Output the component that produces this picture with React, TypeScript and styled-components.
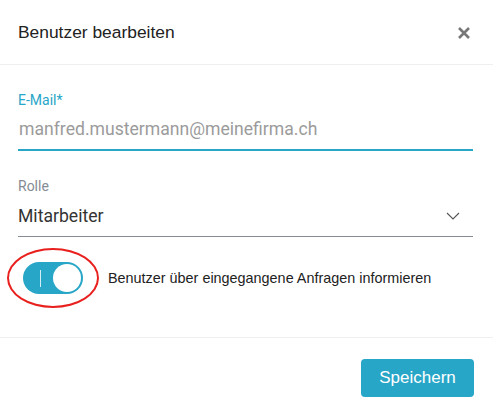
import React from 'react';
import styled, { createGlobalStyle } from 'styled-components';

const GlobalStyle = createGlobalStyle`
  html, body {
    margin: 0;
    padding: 0;
    background: #fff;
  }
  body {
    font-family: "Liberation Sans", Arial, sans-serif;
  }
`;

const accent = '#27a6c7';

const Dialog = styled.div`
  width: 493px;
  height: 417px;
  background: #fff;
  display: flex;
  flex-direction: column;
`;

const Header = styled.div`
  height: 65px;
  box-sizing: border-box;
  border-bottom: 1px solid #efefef;
  display: flex;
  align-items: center;
  justify-content: space-between;
  padding: 0 22px 0 18px;
`;

const Title = styled.h2`
  margin: 0;
  font-size: 17.4px;
  font-weight: 400;
  color: #222;
`;

const CloseButton = styled.button`
  border: 0;
  background: none;
  padding: 0;
  width: 14px;
  height: 14px;
  display: flex;
  cursor: pointer;
  margin-top: 2px;
`;

const Body = styled.div`
  height: 273px;
  box-sizing: border-box;
  padding: 26px 20px 0 18px;
  border-bottom: 1px solid #efefef;
  font-family: Roboto, "Liberation Sans", sans-serif;
`;

const Field = styled.div<{ $spacing?: number }>`
  margin-bottom: ${p => p.$spacing ?? 0}px;
`;

const Label = styled.label<{ $active?: boolean }>`
  display: block;
  font-size: 14px;
  line-height: 18px;
  color: ${p => (p.$active ? accent : '#858b94')};
`;

const InputRow = styled.div<{ $active?: boolean }>`
  display: flex;
  align-items: center;
  justify-content: space-between;
  height: 42px;
  box-sizing: border-box;
  border-bottom: ${p => (p.$active ? `2px solid ${accent}` : '1px solid #858b94')};
`;

const InputText = styled.span<{ $placeholder?: boolean }>`
  font-size: 17.6px;
  padding-left: ${p => (p.$placeholder ? 1 : 0)}px;
  color: ${p => (p.$placeholder ? '#9b9b9b' : '#333')};
`;

const Chevron = styled.span`
  display: flex;
  margin-right: 13px;
`;

const ToggleRow = styled.div`
  display: flex;
  align-items: center;
  margin-top: 11px;
  margin-left: -11px;
`;

const Highlight = styled.div`
  border: 2px solid #e8201e;
  border-radius: 50%;
  width: 92px;
  height: 60px;
  box-sizing: border-box;
  display: flex;
  align-items: center;
  justify-content: center;
`;

const Switch = styled.div<{ $on?: boolean }>`
  position: relative;
  width: 60px;
  height: 32px;
  border-radius: 16px;
  background: ${p => (p.$on ? accent : '#ccc')};
  display: flex;
  align-items: center;
  justify-content: ${p => (p.$on ? 'flex-end' : 'flex-start')};
  padding: 0 2px;
  box-sizing: border-box;
`;

const OnMark = styled.span`
  position: absolute;
  left: 17px;
  top: 8px;
  width: 1px;
  height: 17px;
  background: rgba(255, 255, 255, 0.8);
`;

const Knob = styled.span`
  width: 28px;
  height: 28px;
  border-radius: 50%;
  background: #fff;
`;

const ToggleLabel = styled.span`
  margin-left: 9px;
  font-family: "Liberation Sans", Arial, sans-serif;
  font-size: 14.4px;
  color: #222;
`;

const Footer = styled.div`
  flex: 1;
  display: flex;
  justify-content: flex-end;
  align-items: flex-start;
  padding: 21px 19px 0 0;
`;

const PrimaryButton = styled.button`
  width: 113px;
  height: 38px;
  border: 0;
  border-radius: 4px;
  background: ${accent};
  color: #fff;
  font-family: "Liberation Sans", Arial, sans-serif;
  font-size: 17px;
  cursor: pointer;
`;

export default function App() {
  return (
    <>
      <GlobalStyle />
      <Dialog>
        <Header>
          <Title>Benutzer bearbeiten</Title>
          <CloseButton aria-label="Schliessen">
            <svg width="14" height="14" viewBox="0 0 14 14">
              <path d="M2 2 L12 12 M12 2 L2 12" stroke="#777" strokeWidth="2.6" strokeLinecap="butt" />
            </svg>
          </CloseButton>
        </Header>

        <Body>
          <Field $spacing={26}>
            <Label $active>E-Mail*</Label>
            <InputRow $active>
              <InputText $placeholder>manfred.mustermann@meinefirma.ch</InputText>
            </InputRow>
          </Field>

          <Field>
            <Label>Rolle</Label>
            <InputRow>
              <InputText>Mitarbeiter</InputText>
              <Chevron>
                <svg width="14" height="8" viewBox="0 0 14 8">
                  <path d="M1 1 L7 7 L13 1" fill="none" stroke="#555" strokeWidth="1.1" />
                </svg>
              </Chevron>
            </InputRow>
          </Field>

          <ToggleRow>
            <Highlight>
              <Switch $on>
                <OnMark />
                <Knob />
              </Switch>
            </Highlight>
            <ToggleLabel>Benutzer über eingegangene Anfragen informieren</ToggleLabel>
          </ToggleRow>
        </Body>

        <Footer>
          <PrimaryButton>Speichern</PrimaryButton>
        </Footer>
      </Dialog>
    </>
  );
}
